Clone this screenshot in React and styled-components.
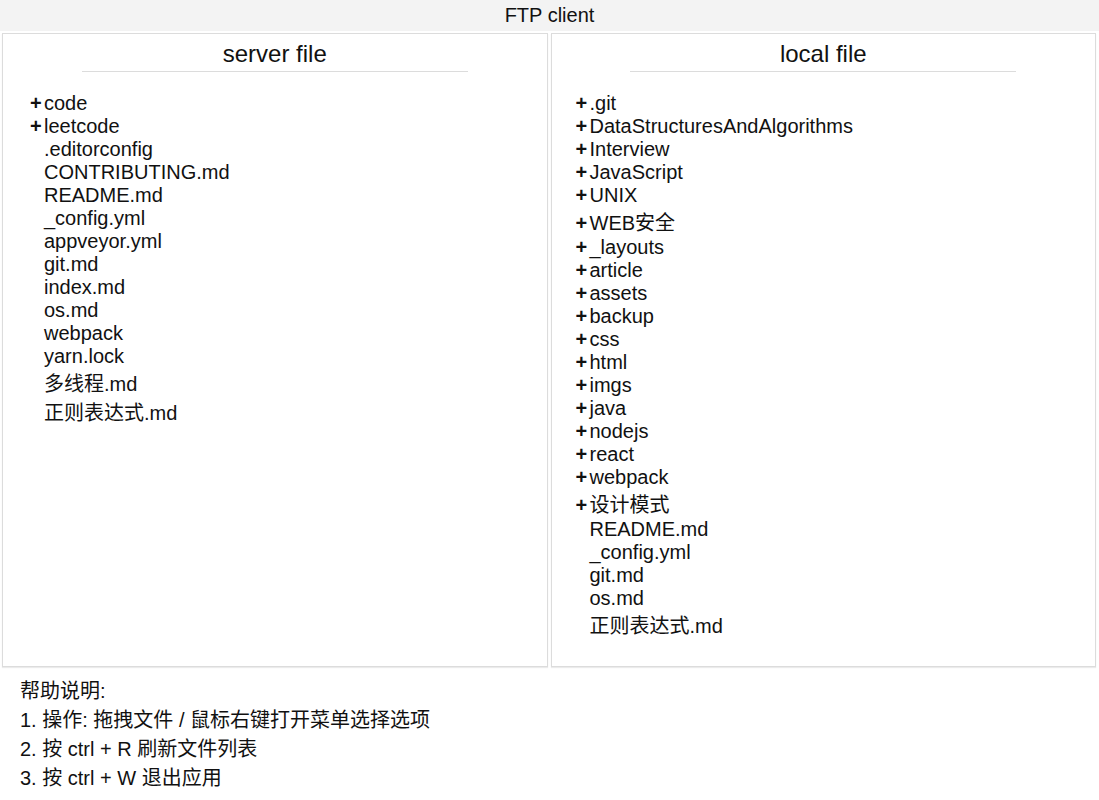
import React from 'react';
import styled, { createGlobalStyle } from 'styled-components';

const GlobalStyle = createGlobalStyle`
  html, body {
    margin: 0;
    padding: 0;
    background: #fff;
    font-family: "Liberation Sans", Arial, "Noto Sans CJK SC", sans-serif;
    color: #111;
  }
`;

const Header = styled.div`
  height: 31px;
  line-height: 30px;
  background: #f3f3f3;
  text-align: center;
  font-size: 20px;
`;

const Panels = styled.div`
  display: flex;
  gap: 3px;
  padding: 2px 3px 0 2px;
  height: 634px;
`;

const Panel = styled.div`
  flex: 1;
  border: 1px solid #dcdcdc;
  box-shadow: 0 1px 1px rgba(0, 0, 0, 0.08);
  background: #fff;
  display: flex;
  flex-direction: column;
`;

const Title = styled.div`
  width: 71%;
  margin: 0 auto;
  text-align: center;
  font-size: 24px;
  padding: 6px 0 3px;
  border-bottom: 1px solid #dcdcdc;
`;

const List = styled.ul`
  list-style: none;
  margin: 20px 0 0;
  padding: 0 0 0 ${p => p.$indent}px;
  font-size: 20px;
`;

const Row = styled.li`
  display: flex;
  align-items: baseline;
`;

const Plus = styled.span`
  width: 14px;
  flex: none;
  font-weight: bold;
`;

const Help = styled.div`
  padding: 8px 20px 0;
  font-size: 20px;
`;

const serverFiles = [
  ['code', true], ['leetcode', true], ['.editorconfig'], ['CONTRIBUTING.md'],
  ['README.md'], ['_config.yml'], ['appveyor.yml'], ['git.md'], ['index.md'],
  ['os.md'], ['webpack'], ['yarn.lock'], ['多线程.md'], ['正则表达式.md'],
];

const localFiles = [
  ['.git', true], ['DataStructuresAndAlgorithms', true], ['Interview', true],
  ['JavaScript', true], ['UNIX', true], ['WEB安全', true], ['_layouts', true],
  ['article', true], ['assets', true], ['backup', true], ['css', true],
  ['html', true], ['imgs', true], ['java', true], ['nodejs', true],
  ['react', true], ['webpack', true], ['设计模式', true], ['README.md'],
  ['_config.yml'], ['git.md'], ['os.md'], ['正则表达式.md'],
];

function FilePanel({ title, files, indent }) {
  return (
    <Panel>
      <Title>{title}</Title>
      <List $indent={indent}>
        {files.map(([name, dir]) => (
          <Row key={name}>
            <Plus>{dir ? '+' : ''}</Plus>
            {name}
          </Row>
        ))}
      </List>
    </Panel>
  );
}

export default function App() {
  return (
    <>
      <GlobalStyle />
      <Header>FTP client</Header>
      <Panels>
        <FilePanel title="server file" files={serverFiles} indent={27} />
        <FilePanel title="local file" files={localFiles} indent={24} />
      </Panels>
      <Help>
        <div>帮助说明:</div>
        <div>1. 操作: 拖拽文件 / 鼠标右键打开菜单选择选项</div>
        <div>2. 按 ctrl + R 刷新文件列表</div>
        <div>3. 按 ctrl + W 退出应用</div>
      </Help>
    </>
  );
}
